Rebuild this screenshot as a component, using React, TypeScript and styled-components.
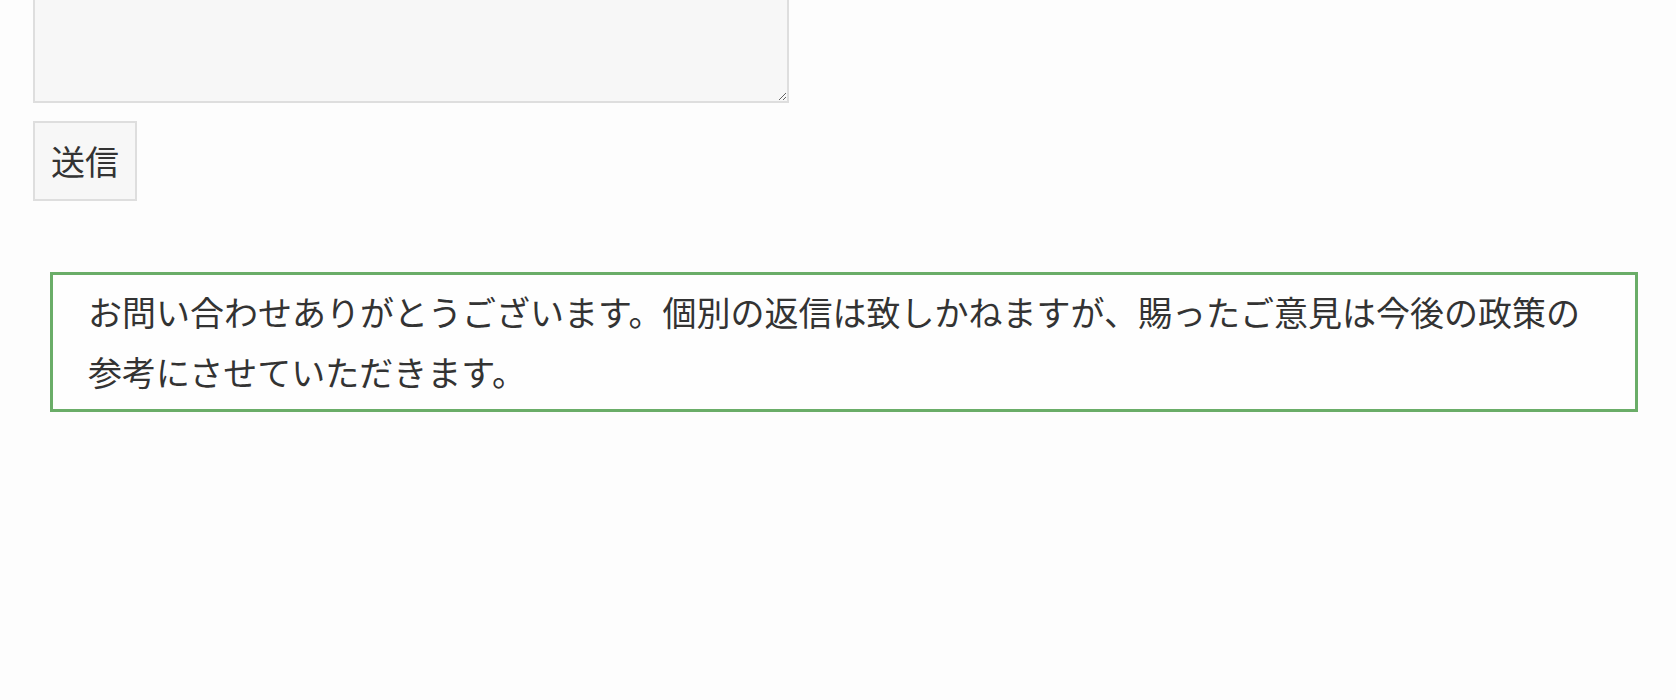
import styled, { createGlobalStyle } from "styled-components";

const font_stack = `"Noto Sans CJK JP", "Noto Sans", sans-serif`;
const text_color = "#333333";
const field_bg = "#f7f7f7";
const field_border = "#dedede";
const notice_green = "#6aad68";

const GlobalStyle = createGlobalStyle`
  html, body {
    margin: 0;
    padding: 0;
    background: #fdfdfd;
  }
  body {
    font-family: ${font_stack};
    color: ${text_color};
  }
`;

function App() {
  return (
    <Page>
      <GlobalStyle />
      <ContactForm onSubmit={(e) => e.preventDefault()}>
        <MessageArea name="message" />
        <SubmitButton type="submit">送信</SubmitButton>
      </ContactForm>
      <ThanksNotice>
        お問い合わせありがとうございます。個別の返信は致しかねますが、賜ったご意見は今後の政策の参考にさせていただきます。
      </ThanksNotice>
    </Page>
  );
}

const Page = styled.div`
  width: 1676px;
  height: 700px;
  overflow: hidden;
  box-sizing: border-box;
  padding: 0 38px 0 33px;
`;

const ContactForm = styled.form`
  display: flex;
  flex-direction: column;
  align-items: flex-start;
  gap: 18px;
`;

const MessageArea = styled.textarea`
  display: block;
  box-sizing: border-box;
  width: 756px;
  height: 220px;
  margin: -117px 0 0;
  padding: 8px 12px;
  background: ${field_bg};
  border: 2px solid ${field_border};
  border-radius: 0;
  font-family: ${font_stack};
  font-size: 20px;
  color: ${text_color};
  outline: none;
`;

const SubmitButton = styled.button`
  box-sizing: border-box;
  height: 80px;
  margin: 0;
  padding: 12px 16px;
  background: ${field_bg};
  border: 2px solid ${field_border};
  border-radius: 0;
  font-family: ${font_stack};
  font-size: 34px;
  line-height: 52px;
  color: ${text_color};
  cursor: pointer;
`;

const ThanksNotice = styled.p`
  margin: 71px 0 0 17px;
  padding: 7px 35px;
  border: 3px solid ${notice_green};
  background: #fefefe;
  font-size: 34px;
  line-height: 60px;
  color: ${text_color};
`;

export default App;
